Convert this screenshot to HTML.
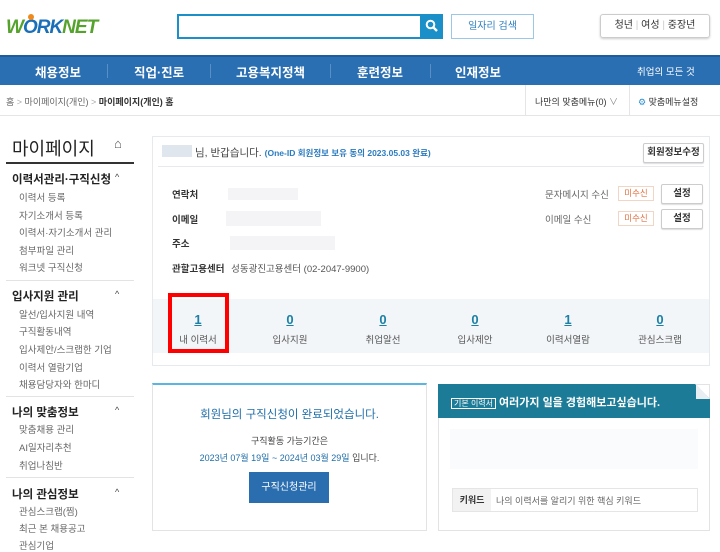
<!DOCTYPE html>
<html><head><meta charset="utf-8"><style>
*{margin:0;padding:0;box-sizing:border-box}
body{width:720px;height:543px;overflow:hidden;background:#fff;font-family:"Liberation Sans","Noto Sans CJK KR",sans-serif;color:#333;position:relative;font-size:11px}
.a{position:absolute;white-space:nowrap}
.nav{position:absolute;left:0;top:55px;width:720px;height:30px;background:#2b6fb3;border-top:2px solid #1f5c99}
.nav span{position:absolute;top:5px;color:#fff;font-size:12.5px;font-weight:bold}
.sep{position:absolute;top:7px;width:1px;height:14px;background:#5a8fc6}
.sb{font-size:11.5px;font-weight:bold;color:#222}
.si{font-size:9.5px;color:#666;left:19px}
.car{font-size:9px;color:#444;left:115px}
.hr{position:absolute;left:6px;width:128px;height:1px;background:#e3e3e3}
.lbl{font-size:9.5px;font-weight:bold;color:#333;left:172px}
.blur{position:absolute;background:#f4f4f6}
.num{position:absolute;top:312px;font-size:13px;font-weight:bold;color:#1c7fa5;text-decoration:underline;text-align:center;width:60px}
.sl{position:absolute;top:332px;font-size:9.5px;color:#555;text-align:center;width:80px}
.btn{position:absolute;border:1px solid #ccc;border-radius:2px;background:#fff;font-size:9.5px;font-weight:bold;color:#333;text-align:center;box-shadow:0 1px 1px #ddd}
.mi{position:absolute;border:1px solid #f1d6c6;color:#e07040;font-size:8.5px;text-align:center;background:#fff}
</style></head><body>
<div class="a" style="left:6px;top:17px;font-size:19px;font-weight:bold;font-style:italic;letter-spacing:-1px"><span style="color:#55a22d">W</span><span style="color:#1a6fb8">ORK</span><span style="color:#55a22d">NET</span></div>
<div class="a" style="left:28px;top:14px;width:6px;height:6px;border-radius:3px;background:#f08a1c"></div>
<div class="a" style="left:177px;top:14px;width:266px;height:25px;border:2px solid #1b8fc7;background:#fff"></div>
<div class="a" style="left:420px;top:14px;width:23px;height:25px;background:#1b8fc7"></div>
<svg class="a" style="left:425px;top:19px" width="14" height="14" viewBox="0 0 14 14"><circle cx="5.5" cy="5.5" r="3.8" stroke="#fff" stroke-width="2" fill="none"/><path d="M8.3 8.3L12 12" stroke="#fff" stroke-width="2.4"/></svg>
<div class="a" style="left:451px;top:14px;width:83px;height:25px;border:1px solid #9cc7e6;color:#2d7fc0;font-size:10px;text-align:center;line-height:23px">일자리 검색</div>
<div class="a" style="left:600px;top:14px;width:110px;height:24px;border:1px solid #ccc;border-radius:3px;box-shadow:0 1px 2px #ccc;font-size:10px;line-height:22px;text-align:center;color:#333">청년 <span style="color:#ccc">|</span> 여성 <span style="color:#ccc">|</span> 중장년</div>
<div class="nav">
<span style="left:35px">채용정보</span><div class="sep" style="left:107px"></div>
<span style="left:134px">직업·진로</span><div class="sep" style="left:210px"></div>
<span style="left:236px">고용복지정책</span><div class="sep" style="left:330px"></div>
<span style="left:357px">훈련정보</span><div class="sep" style="left:430px"></div>
<span style="left:455px">인재정보</span>
<span style="left:637px;font-size:9.5px;font-weight:normal;top:7px">취업의 모든 것</span>
</div>
<div class="a" style="left:6px;top:95px;font-size:9px;color:#666">홈 <span style="color:#aaa">&gt;</span> 마이페이지(개인) <span style="color:#aaa">&gt;</span> <b style="color:#333">마이페이지(개인) 홈</b></div>
<div class="a" style="left:525px;top:85px;width:1px;height:30px;background:#e5e5e5"></div>
<div class="a" style="left:535px;top:95px;font-size:9px;color:#333">나만의 맞춤메뉴(0) <span style="color:#888">∨</span></div>
<div class="a" style="left:629px;top:85px;width:1px;height:30px;background:#e5e5e5"></div>
<div class="a" style="left:638px;top:95px;font-size:9px;color:#333"><span style="color:#2d8fd0">⚙</span> 맞춤메뉴설정</div>
<div class="a" style="left:0;top:115px;width:720px;height:1px;background:#e5e5e5"></div>
<div class="a" style="left:12px;top:135px;font-size:18px;color:#222">마이페이지</div>
<div class="a" style="left:114px;top:136px;font-size:13px;color:#555">⌂</div>
<div class="a" style="left:6px;top:162px;width:128px;height:2px;background:#333"></div>
<div class="a sb" style="left:12px;top:171px">이력서관리·구직신청</div><div class="a car" style="top:172px">^</div>
<div class="a si" style="top:190px">이력서 등록</div>
<div class="a si" style="top:208px">자기소개서 등록</div>
<div class="a si" style="top:225px">이력서·자기소개서 관리</div>
<div class="a si" style="top:243px">첨부파일 관리</div>
<div class="a si" style="top:260px">워크넷 구직신청</div>
<div class="hr" style="top:280px"></div>
<div class="a sb" style="left:12px;top:288px">입사지원 관리</div><div class="a car" style="top:289px">^</div>
<div class="a si" style="top:307px">알선/입사지원 내역</div>
<div class="a si" style="top:324px">구직활동내역</div>
<div class="a si" style="top:342px">입사제안/스크랩한 기업</div>
<div class="a si" style="top:360px">이력서 열람기업</div>
<div class="a si" style="top:377px">채용담당자와 한마디</div>
<div class="hr" style="top:396px"></div>
<div class="a sb" style="left:12px;top:404px">나의 맞춤정보</div><div class="a car" style="top:405px">^</div>
<div class="a si" style="top:422px">맞춤채용 관리</div>
<div class="a si" style="top:440px">AI일자리추천</div>
<div class="a si" style="top:458px">취업나침반</div>
<div class="hr" style="top:477px"></div>
<div class="a sb" style="left:12px;top:486px">나의 관심정보</div><div class="a car" style="top:487px">^</div>
<div class="a si" style="top:504px">관심스크랩(찜)</div>
<div class="a si" style="top:521px">최근 본 채용공고</div>
<div class="a si" style="top:538px">관심기업</div>
<div class="a" style="left:152px;top:136px;width:558px;height:230px;border:1px solid #e6eaee"></div>
<div class="blur" style="left:162px;top:145px;width:30px;height:12px;background:#dfe6ee"></div>
<div class="a" style="left:195px;top:145px;font-size:10.5px;color:#444">님, 반갑습니다. <span style="color:#2a7bc0;font-size:8.5px;font-weight:bold">(One-ID 회원정보 보유 동의 2023.05.03 완료)</span></div>
<div class="btn" style="left:643px;top:143px;width:61px;height:20px;line-height:18px">회원정보수정</div>
<div class="a" style="left:158px;top:166px;width:546px;height:1px;background:#e6eaee"></div>
<div class="a lbl" style="top:187px">연락처</div><div class="blur" style="left:228px;top:188px;width:70px;height:12px"></div>
<div class="a lbl" style="top:212px">이메일</div><div class="blur" style="left:226px;top:211px;width:95px;height:15px"></div>
<div class="a lbl" style="top:236px">주소</div><div class="blur" style="left:230px;top:236px;width:105px;height:14px"></div>
<div class="a lbl" style="top:261px">관할고용센터 <span style="font-weight:normal;color:#555;margin-left:4px">성동광진고용센터 (02-2047-9900)</span></div>
<div class="a" style="left:545px;top:187px;font-size:9.5px;color:#666">문자메시지 수신</div>
<div class="mi" style="left:618px;top:186px;width:36px;height:15px;line-height:13px">미수신</div>
<div class="btn" style="left:661px;top:184px;width:42px;height:20px;line-height:18px">설정</div>
<div class="a" style="left:545px;top:212px;font-size:9.5px;color:#666">이메일 수신</div>
<div class="mi" style="left:618px;top:211px;width:36px;height:15px;line-height:13px">미수신</div>
<div class="btn" style="left:661px;top:209px;width:42px;height:20px;line-height:18px">설정</div>
<div class="a" style="left:153px;top:299px;width:556px;height:54px;background:#f3f6f9"></div>
<div class="num" style="left:168px">1</div><div class="sl" style="left:158px">내 이력서</div>
<div class="num" style="left:260px">0</div><div class="sl" style="left:250px">입사지원</div>
<div class="num" style="left:353px">0</div><div class="sl" style="left:343px">취업알선</div>
<div class="num" style="left:445px">0</div><div class="sl" style="left:435px">입사제안</div>
<div class="num" style="left:538px">1</div><div class="sl" style="left:528px">이력서열람</div>
<div class="num" style="left:630px">0</div><div class="sl" style="left:620px">관심스크랩</div>
<div class="a" style="left:168px;top:293px;width:61px;height:60px;border:4px solid #f00"></div>
<div class="a" style="left:152px;top:383px;width:275px;height:148px;border:1px solid #e3e3e3;border-top:2px solid #5ab6e0"></div>
<div class="a" style="left:152px;top:406px;width:275px;text-align:center;font-size:11.5px;color:#1f6ea8">회원님의 구직신청이 완료되었습니다.</div>
<div class="a" style="left:152px;top:434px;width:275px;text-align:center;font-size:9px;color:#444">구직활동 가능기간은</div>
<div class="a" style="left:152px;top:451px;width:275px;text-align:center;font-size:9px;color:#1f6ea8">2023년 07월 19일 ~ 2024년 03월 29일 <span style="color:#444">입니다.</span></div>
<div class="a" style="left:249px;top:472px;width:80px;height:31px;background:#2a6eb0;color:#fff;font-size:10px;line-height:31px;text-align:center">구직신청관리</div>
<div class="a" style="left:438px;top:384px;width:272px;height:147px;border:1px solid #e3e3e3"></div>
<div class="a" style="left:438px;top:384px;width:272px;height:34px;background:#1c7c98;clip-path:polygon(0 0,257px 0,272px 15px,272px 100%,0 100%)"></div>
<div class="a" style="left:696px;top:384px;width:14px;height:15px;background:#e8eef2;clip-path:polygon(0 0,100% 100%,0 100%)"></div>
<div class="a" style="left:451px;top:394px;font-size:11px;font-weight:bold;color:#fff"><span style="border:1px solid #fff;font-size:8px;font-weight:normal;padding:0 2px;margin-right:3px">기본 이력서</span>여러가지 일을 경험해보고싶습니다.</div>
<div class="blur" style="left:450px;top:429px;width:248px;height:40px;background:#fafbfc"></div>
<div class="a" style="left:452px;top:488px;width:246px;height:24px;border:1px solid #e5e5e5"></div>
<div class="a" style="left:453px;top:489px;width:38px;height:22px;background:#f2f2f2;font-size:9px;font-weight:bold;line-height:22px;text-align:center">키워드</div>
<div class="a" style="left:496px;top:494px;font-size:9px;color:#666">나의 이력서를 알리기 위한 핵심 키워드</div>
</body></html>
